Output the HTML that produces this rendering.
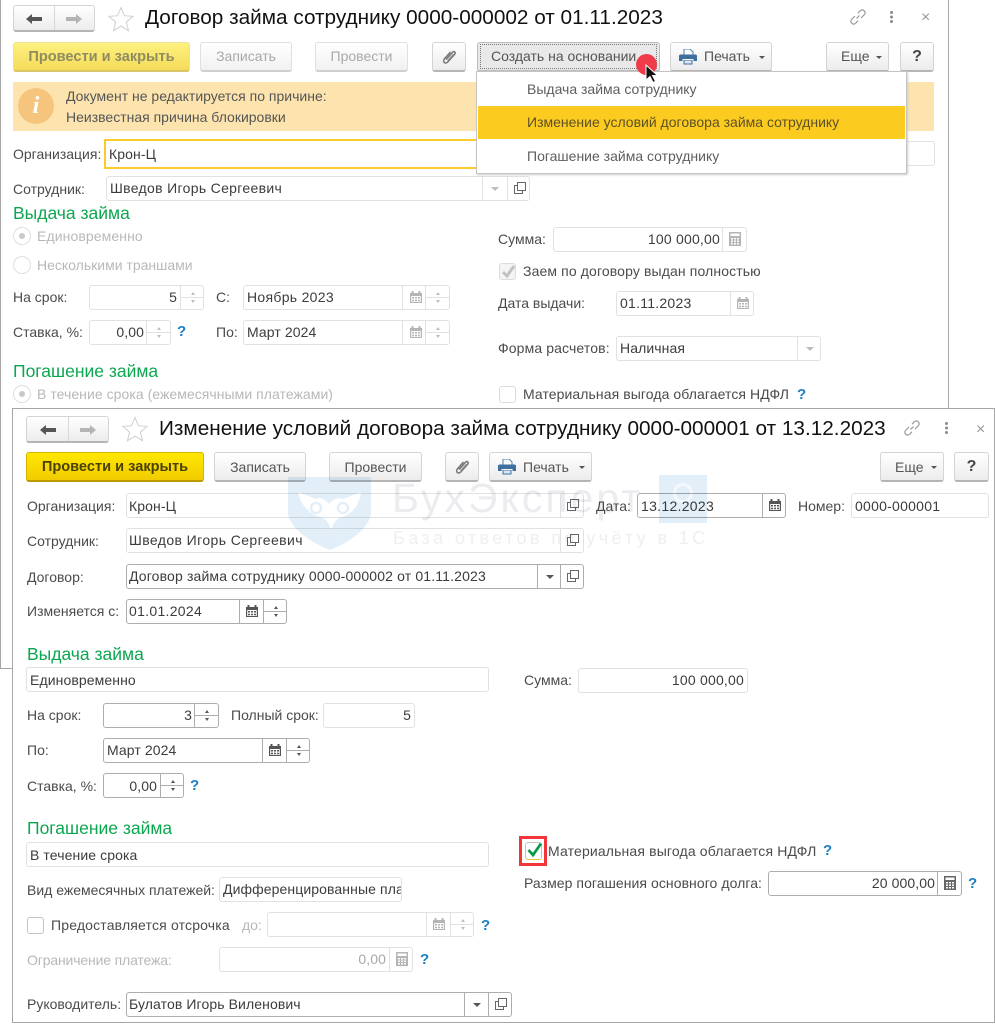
<!DOCTYPE html>
<html lang="ru"><head><meta charset="utf-8"><title>Договор займа</title>
<style>
html,body{margin:0;padding:0;background:#fff}
#r{position:relative;width:995px;height:1024px;overflow:hidden;background:#fff;font:14px/18px "Liberation Sans",sans-serif;color:#4b4b4b;filter:blur(.35px)}
#r div,#r span.t{box-sizing:border-box}
.w{position:absolute;background:#fff;border:1px solid #a6a6a6}
.t{position:absolute;white-space:nowrap;line-height:18px}
.g{color:#b8b8b8}
.h{position:absolute;white-space:nowrap;font-size:17.5px;line-height:20px;color:#0ca650}
.q{position:absolute;font-weight:bold;font-size:15px;line-height:18px;color:#1c7fc4}
.ti{position:absolute;white-space:nowrap;font-size:20.75px;line-height:26px;color:#111}
.btn{position:absolute;height:29px;border:1px solid #d4d4d4;border-bottom:2px solid #b5b5b5;border-radius:3px;background:linear-gradient(#fff,#ececec);text-align:center;line-height:27px;color:#555;white-space:nowrap}
.l2{line-height:28px}
.dis{color:#a9a9a9;border-color:#e0e0e0;border-bottom-color:#cfcfcf;background:linear-gradient(#fff,#f1f1f1)}
.y{font-weight:bold;font-size:14.6px;line-height:29px;color:#4a4200;background:linear-gradient(#ffe800,#f2cb00);border-color:#d6b400;border-bottom-color:#bb9c00}
.yd{font-weight:bold;font-size:14.6px;line-height:28px;color:#8f8c60;background:linear-gradient(#fdf17f,#f5db5b);border-color:#eee0a0;border-bottom-color:#d8c766}
.f{position:absolute;border:1px solid #e1e1e1;border-radius:3px;background:#fff;padding-left:3px;color:#3c3c3c;white-space:nowrap;overflow:hidden;letter-spacing:.1px}
.p2{padding-left:2px}
.e{border-color:#adadad}
.a{text-align:right;padding:0 3px 0 0}
.b{position:absolute;width:24px;border-left:1px solid #e1e1e1}
.e2{border-left-color:#adadad}
.b svg{position:absolute;left:5px;top:4px}
.sp{background:linear-gradient(#e1e1e1,#e1e1e1) 0 50%/100% 1px no-repeat}
.sp.e2{background:linear-gradient(#adadad,#adadad) 0 50%/100% 1px no-repeat}
.sp::before,.sp::after{content:"";position:absolute;left:10px;border-left:2.5px solid transparent;border-right:2.5px solid transparent}
.sp::before{top:6px;border-bottom:3px solid #bdbdbd}
.sp::after{bottom:6px;border-top:3px solid #bdbdbd}
.sp.e2::before{border-bottom-color:#555}.sp.e2::after{border-top-color:#555}
.cb::after{content:"";position:absolute;left:8px;top:10px;border-left:4px solid transparent;border-right:4px solid transparent;border-top:4px solid #bdbdbd}
.cb.e2::after{border-top-color:#555}
.rd{position:absolute;width:18px;height:18px;border-radius:50%;border:1px solid #dfdfdf;background:#fff}
.rd i{position:absolute;left:5px;top:5px;width:6px;height:6px;border-radius:50%;background:#c9c9c9}
.ck{position:absolute;width:17px;height:17px;border:1px solid #c4c4c4;border-radius:3px;background:#fff}
.ar{position:absolute;width:0;height:0;border-left:3.5px solid transparent;border-right:3.5px solid transparent;border-top:3.5px solid #555}
svg{display:block}
svg.a2{position:absolute}
</style></head><body><div id="r">
<svg width="0" height="0" style="position:absolute"><defs>
<symbol id="cal" viewBox="0 0 14 14"><path d="M1 3h12v10H1z" fill="currentColor"/><path d="M3.500 1v3M10.500 1v3" stroke="currentColor" stroke-width="2"/><path d="M2.200 6h9.600v6H2.200z" fill="#fff"/><path d="M3 7h2v1.500H3zM6 7h2v1.500H6zM9 7h2v1.500H9zM3 9.700h2v1.500H3zM6 9.700h2v1.500H6zM9 9.700h2v1.500H9z" fill="currentColor"/></symbol>
<symbol id="calc" viewBox="0 0 14 14"><path d="M1 0h12v14H1z" fill="currentColor"/><path d="M2.500 1.500h9v2.500h-9z" fill="#fff"/><path d="M3 6h2v1.500H3zM6 6h2v1.500H6zM9 6h2v1.500H9zM3 8.500h2V10H3zM6 8.500h2V10H6zM9 8.500h2V10H9zM3 11h2v1.500H3zM6 11h2v1.500H6zM9 11h2v1.500H9z" fill="#fff"/></symbol>
<symbol id="cp" viewBox="0 0 14 14"><path d="M4.500 1.500h8v8h-8z" fill="none" stroke="#666" stroke-width="1"/><path d="M4.500 4.500h-3v8h8v-3" fill="none" stroke="#666" stroke-width="1"/></symbol>
<symbol id="clip" viewBox="0 0 18 18"><path d="M5 11.500 11.500 4.200c1.500-1.600 3.600.3 2.200 2L6.700 14c-2.400 2.500-5.600-.4-3.300-3.100L9.500 4" fill="none" stroke="#777" stroke-width="1.500" transform="translate(1 0)"/><path d="M7.500 12.500 13.500 6" fill="none" stroke="#999" stroke-width="1.100"/></symbol>
<symbol id="pr" viewBox="0 0 18 16"><path d="M5 0h6l3 3v4H5z" fill="#fff" stroke="#4d7da8" stroke-width="1"/><path d="M1.500 5.500h15c.8 0 1.500.7 1.500 1.500v5h-3.500v-2h-11v2H0V7c0-.8.7-1.500 1.500-1.500z" fill="#3f6f9e"/><path d="M4.500 11h9v4.500h-9z" fill="#3f6f9e"/><path d="M5.500 11.500h7v3h-7z" fill="#dbe6f0"/></symbol>
<symbol id="star" viewBox="0 0 26 26"><path d="M13 1.500 16.400 9.700 25 10.400 18.400 16.100 20.500 24.700 13 20.100 5.500 24.700 7.600 16.100 1 10.400 9.600 9.700z" fill="#fff" stroke="#cfcfcf" stroke-width="1"/></symbol>
<symbol id="lnk" viewBox="0 0 18 18"><path d="M7.500 10.500l3-3M6 8 3 11c-1.500 1.500-1.500 3 -.3 4.200 1.200 1.200 2.800 1.200 4.200-.2L9 12.800M9 5.200 11 3c1.500-1.400 3-1.400 4.200-.2 1.200 1.200 1.200 2.800-.2 4.200l-3 3" fill="none" stroke="#9a9a9a" stroke-width="1.200"/></symbol>
<symbol id="larr" viewBox="0 0 16 12"><path d="M0 6 6 1v3h10v4H6v3z" fill="#555"/></symbol>
<symbol id="rarr" viewBox="0 0 16 12"><path d="M16 6 10 1v3H0v4h10v3z" fill="#b4b4b4"/></symbol>
</defs></svg>

<!-- WINDOW 1 -->
<div class="w" style="left:0;top:-2px;width:949px;height:671px"></div>
<div class="btn" style="left:13px;top:5px;width:82px;height:27px"></div>
<div style="position:absolute;left:54px;top:6px;width:1px;height:24px;background:#d8d8d8"></div>
<svg class="a2" style="left:26px;top:13px" width="16" height="12"><use href="#larr"/></svg>
<svg class="a2" style="left:66px;top:13px" width="16" height="12"><use href="#rarr"/></svg>
<svg class="a2" style="left:108px;top:6px" width="26" height="26"><use href="#star"/></svg>
<div class="ti" style="left:145px;top:5px">Договор займа сотруднику 0000-000002 от 01.11.2023</div>
<svg class="a2" style="left:849px;top:8px" width="18" height="18"><use href="#lnk"/></svg>
<div style="position:absolute;left:890px;top:11px;width:3px;height:3px;background:#8a8a8a;box-shadow:0 4.500px 0 #8a8a8a,0 9px 0 #8a8a8a;border-radius:50%"></div>
<div class="t" style="left:921px;top:9px;font-size:16px;color:#999">×</div>

<div class="btn yd" style="left:13px;top:42px;width:177px;height:30px">Провести и закрыть</div>
<div class="btn dis" style="left:200px;top:42px;width:92px;height:30px">Записать</div>
<div class="btn dis" style="left:315px;top:42px;width:93px;height:30px">Провести</div>
<div class="btn" style="left:432px;top:42px;width:34px;height:30px"></div>
<svg class="a2" style="left:440px;top:48px" width="18" height="18"><use href="#clip"/></svg>
<div class="btn" style="left:477px;top:42px;width:183px;height:30px;background:#e9e9e9;border-color:#bcbcbc;color:#555;text-align:left;padding-left:13px">Создать на основании</div>
<div style="position:absolute;left:480px;top:44px;width:177px;height:25px;border:1px dotted #777"></div>
<div class="btn" style="left:670px;top:42px;width:102px;height:30px;text-align:left;padding-left:33px">Печать</div>
<svg class="a2" style="left:679px;top:49px" width="18" height="16"><use href="#pr"/></svg>
<div class="ar" style="left:759px;top:56px"></div>
<div class="btn" style="left:826px;top:42px;width:63px;height:30px;text-align:left;padding-left:14px">Еще</div>
<div class="ar" style="left:876px;top:56px"></div>
<div class="btn" style="left:900px;top:42px;width:34px;height:30px;font-weight:bold;font-size:16px;color:#444">?</div>

<div style="position:absolute;left:13px;top:82px;width:921px;height:49px;background:#fde4ae"></div>
<div style="position:absolute;left:18px;top:88px;width:36px;height:36px;border-radius:50%;background:#f5c57e"></div>
<div class="t" style="left:18px;top:95px;width:36px;text-align:center;font:italic bold 24px/22px 'Liberation Serif',serif;color:#fff">i</div>
<div class="t" style="left:66px;top:87px;color:#555">Документ не редактируется по причине:</div>
<div class="t" style="left:66px;top:108px;color:#555">Неизвестная причина блокировки</div>

<div class="t" style="left:13px;top:145px">Организация:</div>
<div class="f" style="left:104px;top:139px;width:380px;height:30px;border:2px solid #fbcb2b;line-height:26px;border-radius:0">Крон-Ц</div>
<div class="f" style="left:900px;top:141px;width:35px;height:25px"></div>
<div class="t" style="left:13px;top:180px">Сотрудник:</div>
<div class="f" style="left:106px;top:176px;width:424px;height:25px;line-height:23px;letter-spacing:.32px">Шведов Игорь Сергеевич</div>
<div class="b cb" style="left:482px;top:177px;height:23px"></div>
<div class="b" style="left:507px;top:177px;height:23px"><svg width="14" height="14"><use href="#cp"/></svg></div>
<div class="h" style="left:13px;top:203px">Выдача займа</div>
<div class="rd" style="left:13px;top:227px"><i></i></div>
<div class="t g" style="left:37px;top:227px;letter-spacing:.1px">Единовременно</div>
<div class="rd" style="left:13px;top:256px"></div>
<div class="t g" style="left:37px;top:256px">Несколькими траншами</div>
<div class="t" style="left:13px;top:288px">На срок:</div>
<div class="f a" style="left:89px;top:285px;width:115px;height:25px;line-height:23px;padding-right:26px">5</div>
<div class="b sp" style="left:180px;top:286px;height:23px"></div>
<div class="t" style="left:216px;top:288px">С:</div>
<div class="f" style="left:243px;top:285px;width:207px;height:25px;line-height:23px;letter-spacing:.3px">Ноябрь 2023</div>
<div class="b" style="left:402px;top:286px;height:23px;color:#b5b5b5"><svg width="14" height="14" style="left:6px"><use href="#cal"/></svg></div>
<div class="b sp" style="left:425px;top:286px;height:23px"></div>
<div class="t" style="left:13px;top:323px">Ставка, %:</div>
<div class="f a" style="left:89px;top:320px;width:82px;height:25px;line-height:23px;padding-right:26px">0,00</div>
<div class="b sp" style="left:146px;top:321px;height:23px"></div>
<div class="q" style="left:177px;top:323px">?</div>
<div class="t" style="left:216px;top:323px">По:</div>
<div class="f" style="left:243px;top:320px;width:207px;height:25px;line-height:23px">Март 2024</div>
<div class="b" style="left:402px;top:321px;height:23px;color:#b5b5b5"><svg width="14" height="14" style="left:6px"><use href="#cal"/></svg></div>
<div class="b sp" style="left:425px;top:321px;height:23px"></div>
<div class="h" style="left:13px;top:361px">Погашение займа</div>
<div class="rd" style="left:13px;top:385px"><i></i></div>
<div class="t g" style="left:37px;top:385px;letter-spacing:.05px">В течение срока (ежемесячными платежами)</div>

<div class="t" style="left:498px;top:230px">Сумма:</div>
<div class="f a" style="left:553px;top:227px;width:194px;height:25px;line-height:23px;padding-right:26px;letter-spacing:.2px">100 000,00</div>
<div class="b" style="left:722px;top:228px;height:23px;color:#b5b5b5"><svg width="14" height="14" style="left:5px"><use href="#calc"/></svg></div>
<div class="ck" style="left:499px;top:263px;border-color:#dcdcdc;background:#f4f4f4"></div>
<svg class="a2" style="left:500px;top:264px" width="17" height="15"><path d="M3 8l4 4 7-10" fill="none" stroke="#c2c2c2" stroke-width="3"/></svg>
<div class="t" style="left:523px;top:262px;letter-spacing:.12px">Заем по договору выдан полностью</div>
<div class="t" style="left:498px;top:294px">Дата выдачи:</div>
<div class="f" style="left:616px;top:291px;width:138px;height:25px;line-height:23px;letter-spacing:.25px">01.11.2023</div>
<div class="b" style="left:730px;top:292px;height:23px;color:#b5b5b5"><svg width="14" height="14"><use href="#cal"/></svg></div>
<div class="t" style="left:498px;top:339px;letter-spacing:.12px">Форма расчетов:</div>
<div class="f" style="left:616px;top:336px;width:205px;height:25px;line-height:23px">Наличная</div>
<div class="b cb" style="left:797px;top:337px;height:23px"></div>
<div class="ck" style="left:499px;top:386px;border-color:#dcdcdc"></div>
<div class="t" style="left:523px;top:385px;letter-spacing:.08px">Материальная выгода облагается НДФЛ</div>
<div class="q" style="left:797px;top:386px">?</div>

<!-- dropdown -->
<div style="position:absolute;left:476px;top:71px;width:431px;height:103px;background:#fff;border:1px solid #c4c4c4;box-shadow:1px 1px 2px #ccc"></div>
<div style="position:absolute;left:478px;top:106px;width:427px;height:33px;background:#fccb1f"></div>
<div class="t" style="left:527px;top:80px;color:#5e5e5e">Выдача займа сотруднику</div>
<div class="t" style="left:527px;top:113px;color:#5d5127">Изменение условий договора займа сотруднику</div>
<div class="t" style="left:527px;top:147px;color:#5e5e5e">Погашение займа сотруднику</div>
<div style="position:absolute;left:636px;top:54px;width:21px;height:21px;border-radius:50%;background:#f03c4a"></div>
<svg class="a2" style="left:644px;top:63px" width="18" height="22"><path d="M2 2v15l4-3.500 3 6 2.500-1.200-3-5.800h5z" fill="#111" stroke="#fff" stroke-width="1"/></svg>

<!-- WINDOW 2 -->
<div class="w" style="left:12px;top:408px;width:983px;height:615px"></div>
<div class="btn" style="left:26px;top:416px;width:83px;height:27px"></div>
<div style="position:absolute;left:68px;top:417px;width:1px;height:24px;background:#d8d8d8"></div>
<svg class="a2" style="left:40px;top:424px" width="16" height="12"><use href="#larr"/></svg>
<svg class="a2" style="left:80px;top:424px" width="16" height="12"><use href="#rarr"/></svg>
<svg class="a2" style="left:122px;top:416px" width="26" height="26"><use href="#star"/></svg>
<div class="ti" style="left:159px;top:416px">Изменение условий договора займа сотруднику 0000-000001 от 13.12.2023</div>
<svg class="a2" style="left:903px;top:419px" width="18" height="18"><use href="#lnk"/></svg>
<div style="position:absolute;left:945px;top:422px;width:3px;height:3px;background:#8a8a8a;box-shadow:0 4.500px 0 #8a8a8a,0 9px 0 #8a8a8a;border-radius:50%"></div>
<div class="t" style="left:976px;top:421px;font-size:16px;color:#999">×</div>

<div class="btn y" style="left:26px;top:452px;width:178px;height:30px">Провести и закрыть</div>
<div class="btn l2" style="left:214px;top:452px;width:92px;height:30px">Записать</div>
<div class="btn l2" style="left:329px;top:452px;width:93px;height:30px">Провести</div>
<div class="btn" style="left:445px;top:452px;width:34px;height:30px"></div>
<svg class="a2" style="left:453px;top:458px" width="18" height="18"><use href="#clip"/></svg>
<div class="btn l2" style="left:489px;top:452px;width:103px;height:30px;text-align:left;padding-left:33px">Печать</div>
<svg class="a2" style="left:498px;top:459px" width="18" height="16"><use href="#pr"/></svg>
<div class="ar" style="left:579px;top:466px"></div>
<div class="btn l2" style="left:880px;top:452px;width:64px;height:30px;text-align:left;padding-left:14px">Еще</div>
<div class="ar" style="left:931px;top:466px"></div>
<div class="btn l2" style="left:954px;top:452px;width:35px;height:30px;font-weight:bold;font-size:16px;color:#444">?</div>

<div class="t" style="left:27px;top:497px">Организация:</div>
<div class="f p2" style="left:126px;top:493px;width:458px;height:25px;line-height:25px">Крон-Ц</div>
<div class="b" style="left:560px;top:494px;height:23px"><svg width="14" height="14"><use href="#cp"/></svg></div>
<div class="t" style="left:596px;top:497px">Дата:</div>
<div class="f e" style="left:637px;top:493px;width:149px;height:25px;line-height:25px;letter-spacing:.3px">13.12.2023</div>
<div class="b e2" style="left:762px;top:494px;height:23px;color:#555"><svg width="14" height="14"><use href="#cal"/></svg></div>
<div class="t" style="left:798px;top:497px">Номер:</div>
<div class="f" style="left:851px;top:493px;width:138px;height:25px;line-height:25px;letter-spacing:.25px">0000-000001</div>
<div class="t" style="left:27px;top:532px">Сотрудник:</div>
<div class="f p2" style="left:126px;top:528px;width:458px;height:25px;line-height:23px;letter-spacing:.4px">Шведов Игорь Сергеевич</div>
<div class="b" style="left:560px;top:529px;height:23px"><svg width="14" height="14"><use href="#cp"/></svg></div>
<div class="t" style="left:27px;top:568px">Договор:</div>
<div class="f e p2" style="left:126px;top:564px;width:458px;height:25px;line-height:23px;letter-spacing:.15px">Договор займа сотруднику 0000-000002 от 01.11.2023</div>
<div class="b cb e2" style="left:537px;top:565px;height:23px"></div>
<div class="b e2" style="left:560px;top:565px;height:23px"><svg width="14" height="14"><use href="#cp"/></svg></div>
<div class="t" style="left:27px;top:602px">Изменяется с:</div>
<div class="f e p2" style="left:126px;top:599px;width:161px;height:25px;line-height:23px;letter-spacing:.3px">01.01.2024</div>
<div class="b e2" style="left:239px;top:600px;height:23px;color:#555"><svg width="14" height="14"><use href="#cal"/></svg></div>
<div class="b sp e2" style="left:263px;top:600px;height:23px"></div>

<div class="h" style="left:27px;top:644px">Выдача займа</div>
<div class="f" style="left:26px;top:667px;width:463px;height:25px;line-height:25px">Единовременно</div>
<div class="t" style="left:524px;top:671px">Сумма:</div>
<div class="f a" style="left:578px;top:668px;width:170px;height:25px;line-height:23px;letter-spacing:.2px">100 000,00</div>
<div class="t" style="left:27px;top:706px">На срок:</div>
<div class="f e a" style="left:103px;top:703px;width:116px;height:25px;line-height:23px;padding-right:26px">3</div>
<div class="b sp e2" style="left:194px;top:704px;height:23px"></div>
<div class="t" style="left:231px;top:706px">Полный срок:</div>
<div class="f a" style="left:323px;top:703px;width:92px;height:25px;line-height:23px">5</div>
<div class="t" style="left:27px;top:741px">По:</div>
<div class="f e" style="left:103px;top:738px;width:207px;height:25px;line-height:23px">Март 2024</div>
<div class="b e2" style="left:262px;top:739px;height:23px;color:#555"><svg width="14" height="14"><use href="#cal"/></svg></div>
<div class="b sp e2" style="left:286px;top:739px;height:23px"></div>
<div class="t" style="left:27px;top:777px">Ставка, %:</div>
<div class="f e a" style="left:103px;top:773px;width:81px;height:25px;line-height:25px;padding-right:26px">0,00</div>
<div class="b sp e2" style="left:160px;top:774px;height:23px"></div>
<div class="q" style="left:190px;top:777px">?</div>

<div class="h" style="left:27px;top:818px">Погашение займа</div>
<div class="f" style="left:26px;top:842px;width:463px;height:25px;line-height:25px">В течение срока</div>
<div class="t" style="left:27px;top:881px">Вид ежемесячных платежей:</div>
<div class="f" style="left:219px;top:877px;width:183px;height:25px;line-height:23px">Дифференцированные пла</div>
<div class="ck" style="left:27px;top:917px"></div>
<div class="t" style="left:51px;top:916px;letter-spacing:.17px">Предоставляется отсрочка</div>
<div class="t g" style="left:242px;top:916px">до:</div>
<div class="f" style="left:267px;top:912px;width:207px;height:25px"></div>
<div class="b" style="left:426px;top:913px;height:23px;color:#b5b5b5"><svg width="14" height="14"><use href="#cal"/></svg></div>
<div class="b sp" style="left:450px;top:913px;height:23px"></div>
<div class="q" style="left:481px;top:917px">?</div>
<div class="t g" style="left:27px;top:951px;letter-spacing:-.15px">Ограничение платежа:</div>
<div class="f a" style="left:219px;top:947px;width:194px;height:25px;line-height:23px;padding-right:26px;color:#a8a8a8">0,00</div>
<div class="b" style="left:389px;top:948px;height:23px;color:#b5b5b5"><svg width="14" height="14"><use href="#calc"/></svg></div>
<div class="q" style="left:420px;top:951px">?</div>
<div class="t" style="left:27px;top:995px">Руководитель:</div>
<div class="f e p2" style="left:126px;top:992px;width:386px;height:25px;line-height:23px;letter-spacing:.1px">Булатов Игорь Виленович</div>
<div class="b cb e2" style="left:464px;top:993px;height:23px"></div>
<div class="b e2" style="left:488px;top:993px;height:23px"><svg width="14" height="14"><use href="#cp"/></svg></div>

<div style="position:absolute;left:519px;top:836px;width:28px;height:30px;border:3px solid #f2353a"></div>
<div class="ck" style="left:525px;top:842px;height:18px;border-bottom:1px solid #e8c73a"></div>
<svg class="a2" style="left:526px;top:841px" width="18" height="18"><path d="M2.500 9l4.500 5 8-11.500" fill="none" stroke="#0b9a48" stroke-width="2.800"/></svg>
<div class="t" style="left:548px;top:842px;letter-spacing:.15px">Материальная выгода облагается НДФЛ</div>
<div class="q" style="left:823px;top:842px">?</div>
<div class="t" style="left:524px;top:874px;letter-spacing:.06px">Размер погашения основного долга:</div>
<div class="f e a" style="left:768px;top:871px;width:194px;height:25px;line-height:23px;padding-right:26px">20 000,00</div>
<div class="b e2" style="left:937px;top:872px;height:23px;color:#666"><svg width="14" height="14"><use href="#calc"/></svg></div>
<div class="q" style="left:968px;top:875px">?</div>

<!-- watermark -->
<div style="position:absolute;left:0;top:0;width:995px;height:1024px;mix-blend-mode:multiply;pointer-events:none">
<svg class="a2" style="left:288px;top:475px" width="84" height="75" viewBox="0 0 84 75"><path d="M0 2h83v37C80 55 60 68 42 75 24 68 3 55 0 39z" fill="#e3eff8"/><path d="M10 17 28 24c5-2 9 0 13 5 4-5 9-7 14-5l18-7c-2 14-9 22-19 25-4 1-7 3-11 13-3-10-7-12-11-13C22 39 13 31 10 17z" fill="#fff"/><circle cx="28" cy="33" r="5" fill="none" stroke="#e3eff8" stroke-width="2.500"/><circle cx="55" cy="33" r="5" fill="none" stroke="#e3eff8" stroke-width="2.500"/></svg>
<div class="t" style="left:392px;top:477px;font-size:41px;line-height:42px;letter-spacing:3px;color:#ebecf0">БухЭксперт</div>
<div class="t" style="left:393px;top:528px;font-size:18px;line-height:20px;letter-spacing:3.400px;color:#eeeff2">База ответов по учёту в 1С</div>
<div style="position:absolute;left:659px;top:475px;width:48px;height:48px;background:#e3eff8"></div>
<div style="position:absolute;left:673px;top:483px;width:20px;height:20px;border:3px solid #f4f8fc;border-radius:50%"></div>
</div>
</div></body></html>
